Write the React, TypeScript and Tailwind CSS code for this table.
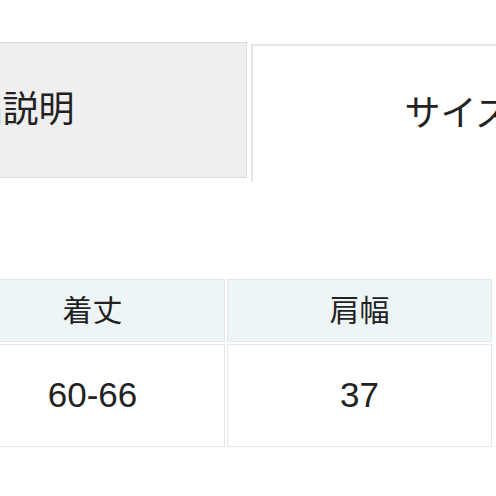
const FONT = "font-['Liberation_Sans','Noto_Sans_CJK_JP',sans-serif]";

const App = () => {
    return (
        <div className={`relative w-[496px] h-[496px] overflow-hidden bg-white text-[#222] ${FONT}`}>
            {/* tabs */}
            <div className="flex items-start mt-[42px]">
                <div className="ml-[-242px] w-[489px] h-[136px] shrink-0 bg-[#efefef] border border-[#dcdcdc] flex items-center justify-center text-[36px] leading-none">
                    商品説明
                </div>
                <div className="ml-[4px] mt-[2px] w-[412px] h-[138px] shrink-0 bg-white border-l-2 border-t-2 border-[#e6e6e6] flex items-center justify-center text-[36px] leading-none">
                    サイズ
                </div>
            </div>

            {/* size table */}
            <div className="mt-[95px] ml-[-42px]">
                <table className="border-separate border-spacing-[2px] text-center">
                    <thead>
                    <tr>
                        <th className="w-[265px] h-[63px] bg-[#eef5f7] border border-[#e3e6e7] font-normal text-[30px]">
                            着丈
                        </th>
                        <th className="w-[265px] h-[63px] bg-[#eef5f7] border border-[#e3e6e7] font-normal text-[30px]">
                            肩幅
                        </th>
                    </tr>
                    </thead>
                    <tbody>
                    <tr>
                        <td className="h-[103px] border border-[#e6e6e6] text-[35px]">60-66</td>
                        <td className="h-[103px] border border-[#e6e6e6] text-[35px]">37</td>
                    </tr>
                    </tbody>
                </table>
            </div>
        </div>
    );
}

export default App;
